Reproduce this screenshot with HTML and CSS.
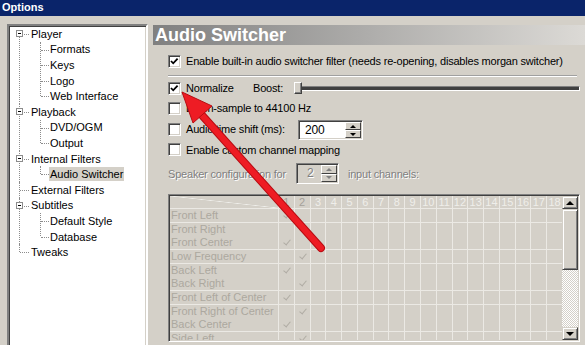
FILE: index.html
```html
<!DOCTYPE html>
<html lang="en">
<head>
  <meta charset="UTF-8">
  <title>Options</title>
  <link rel="stylesheet" href="styles.css">
</head>
<body>
  <div class="titlebar">Options</div>

  <div class="main">
    <!-- left navigation tree -->
    <div class="tree">
      <div class="node">
        <div class="item"><span class="box"></span><span class="txt">Player</span></div>
        <div class="kids">
          <div class="item"><span class="txt">Formats</span></div>
          <div class="item"><span class="txt">Keys</span></div>
          <div class="item"><span class="txt">Logo</span></div>
          <div class="item"><span class="txt">Web Interface</span></div>
        </div>
      </div>
      <div class="node">
        <div class="item"><span class="box"></span><span class="txt">Playback</span></div>
        <div class="kids">
          <div class="item"><span class="txt">DVD/OGM</span></div>
          <div class="item"><span class="txt">Output</span></div>
        </div>
      </div>
      <div class="node">
        <div class="item"><span class="box"></span><span class="txt">Internal Filters</span></div>
        <div class="kids">
          <div class="item"><span class="txt sel">Audio Switcher</span></div>
        </div>
      </div>
      <div class="node">
        <div class="item"><span class="txt">External Filters</span></div>
      </div>
      <div class="node">
        <div class="item"><span class="box"></span><span class="txt">Subtitles</span></div>
        <div class="kids">
          <div class="item"><span class="txt">Default Style</span></div>
          <div class="item"><span class="txt">Database</span></div>
        </div>
      </div>
      <div class="node">
        <div class="item"><span class="txt">Tweaks</span></div>
      </div>
    </div>

    <!-- property page -->
    <div class="page">
      <div class="page-head">Audio Switcher</div>
      <div class="page-body">
        <div class="opt opt-enable">
          <span class="cb"><svg viewBox="0 0 11 11"><polyline points="2,5 4.2,7.3 8.6,2.6"/></svg></span>
          <span>Enable built-in audio switcher filter (needs re-opening, disables morgan switcher)</span>
        </div>
        <div class="sep"></div>
        <div class="opt">
          <span class="cb"><svg viewBox="0 0 11 11"><polyline points="2,5 4.2,7.3 8.6,2.6"/></svg></span>
          <span class="lbl-norm">Normalize</span>
          <span class="lbl-boost">Boost:</span>
          <div class="slider"><span class="thumb"></span></div>
        </div>
        <div class="opt">
          <span class="cb"></span>
          <span>Down-sample to 44100 Hz</span>
        </div>
        <div class="opt opt-shift">
          <span class="cb"></span>
          <span class="lbl-shift">Audio time shift (ms):</span>
          <div class="spin">
            <span class="val">200</span>
            <span class="btns"><span class="btn up"></span><span class="btn down"></span></span>
          </div>
        </div>
        <div class="opt opt-custom">
          <span class="cb"></span>
          <span>Enable custom channel mapping</span>
        </div>
        <div class="speaker">
          <span class="dis">Speaker configuration for</span>
          <div class="spin spin-dis">
            <span class="val dis">2</span>
            <span class="btns"><span class="btn up"></span><span class="btn down"></span></span>
          </div>
          <span class="dis">input channels:</span>
        </div>

        <div class="matrix">
          <div class="cells">
            <div class="mrow mhead">
              <span class="diag"></span>
              <b class="dk">1</b><b class="dk">2</b><b>3</b><b>4</b><b>5</b><b>6</b><b>7</b><b>8</b><b>9</b>
              <b>10</b><b>11</b><b>12</b><b>13</b><b>14</b><b>15</b><b>16</b><b>17</b><b>18</b>
            </div>
            <div class="mrow"><span class="name">Front Left</span><i class="on"></i><i></i><i></i><i></i><i></i><i></i><i></i><i></i><i></i><i></i><i></i><i></i><i></i><i></i><i></i><i></i><i></i><i></i></div>
            <div class="mrow"><span class="name">Front Right</span><i></i><i class="on"></i><i></i><i></i><i></i><i></i><i></i><i></i><i></i><i></i><i></i><i></i><i></i><i></i><i></i><i></i><i></i><i></i></div>
            <div class="mrow"><span class="name">Front Center</span><i class="on"></i><i></i><i></i><i></i><i></i><i></i><i></i><i></i><i></i><i></i><i></i><i></i><i></i><i></i><i></i><i></i><i></i><i></i></div>
            <div class="mrow"><span class="name">Low Frequency</span><i></i><i class="on"></i><i></i><i></i><i></i><i></i><i></i><i></i><i></i><i></i><i></i><i></i><i></i><i></i><i></i><i></i><i></i><i></i></div>
            <div class="mrow"><span class="name">Back Left</span><i class="on"></i><i></i><i></i><i></i><i></i><i></i><i></i><i></i><i></i><i></i><i></i><i></i><i></i><i></i><i></i><i></i><i></i><i></i></div>
            <div class="mrow"><span class="name">Back Right</span><i></i><i class="on"></i><i></i><i></i><i></i><i></i><i></i><i></i><i></i><i></i><i></i><i></i><i></i><i></i><i></i><i></i><i></i><i></i></div>
            <div class="mrow"><span class="name">Front Left of Center</span><i class="on"></i><i></i><i></i><i></i><i></i><i></i><i></i><i></i><i></i><i></i><i></i><i></i><i></i><i></i><i></i><i></i><i></i><i></i></div>
            <div class="mrow"><span class="name">Front Right of Center</span><i></i><i class="on"></i><i></i><i></i><i></i><i></i><i></i><i></i><i></i><i></i><i></i><i></i><i></i><i></i><i></i><i></i><i></i><i></i></div>
            <div class="mrow"><span class="name">Back Center</span><i class="on"></i><i></i><i></i><i></i><i></i><i></i><i></i><i></i><i></i><i></i><i></i><i></i><i></i><i></i><i></i><i></i><i></i><i></i></div>
            <div class="mrow"><span class="name">Side Left</span><i></i><i class="on"></i><i></i><i></i><i></i><i></i><i></i><i></i><i></i><i></i><i></i><i></i><i></i><i></i><i></i><i></i><i></i><i></i></div>
          </div>
          <div class="sbar">
            <span class="sb-btn up"></span>
            <span class="sb-thumb"></span>
            <span class="sb-track"></span>
            <span class="sb-btn down"></span>
          </div>
        </div>
      </div>
    </div>
  </div>

  <!-- red annotation arrow drawn over the dialog -->
  <svg class="arrow" width="585" height="345" viewBox="0 0 585 345">
    <line x1="321" y1="248" x2="200" y2="113" stroke="#b80c12" stroke-width="8" stroke-linecap="round"/>
    <line x1="321" y1="248" x2="200" y2="113" stroke="#ee1c24" stroke-width="6" stroke-linecap="round"/>
    <polygon points="182,92 212,106 193,123" fill="#ee1c24" stroke="#b80c12" stroke-width="1" stroke-linejoin="round"/>
  </svg>
</body>
</html>
```

FILE: styles.css
```css
* {
  box-sizing: border-box;
}

body {
  margin: 0;
  width: 585px;
  height: 345px;
  overflow: hidden;
  position: relative;
  background: #d4d0c8;
  font-family: "Liberation Sans", Arial, sans-serif;
  font-size: 11px;
  color: #000;
}

.titlebar {
  height: 16px;
  line-height: 15px;
  padding-left: 2px;
  background: #0a246a;
  color: #fff;
  font-weight: bold;
}

.main {
  display: flex;
  align-items: flex-start;
}

/* tree */
.tree {
  width: 141px;
  height: 330px;
  margin: 8px 0 0 7px;
  background: #fff;
  border: 2px solid;
  border-color: #808080 #fff #fff #808080;
  box-shadow: inset 1px 1px #404040, inset -1px -1px #d4d0c8;
  padding-left: 0;
}

.node {
  position: relative;
}

.node::before {
  content: '';
  position: absolute;
  left: 10px;
  top: 0;
  bottom: 0;
  border-left: 1px dotted #8c8c8c;
}

.node:first-child::before {
  top: 8px;
}

.node:last-child::before {
  bottom: auto;
  height: 8px;
}

.item {
  position: relative;
  height: 15.6px;
  display: flex;
  align-items: center;
  padding-left: 21px;
}

.item::before {
  content: '';
  position: absolute;
  left: 11px;
  width: 9px;
  top: 8px;
  border-top: 1px dotted #8c8c8c;
}

.box {
  position: absolute;
  left: 7px;
  top: 4px;
  width: 7px;
  height: 7px;
  background: #fff;
  border: 1px solid #8c8c8c;
  z-index: 1;
}

.box::after {
  content: '';
  position: absolute;
  left: 1px;
  top: 2px;
  width: 3px;
  height: 1px;
  background: #000;
}

.txt {
  padding: 1px 1px;
  line-height: 12px;
}

.sel {
  background: #d4d0c8;
}

.kids {
  position: relative;
}

.kids::before {
  content: '';
  position: absolute;
  left: 31px;
  top: 0;
  bottom: 8px;
  border-left: 1px dotted #8c8c8c;
}

.kids .item {
  padding-left: 40px;
}

.kids .item::before {
  left: 32px;
  width: 8px;
}

/* page */
.page {
  flex: 1;
  margin: 9px 0 0 5px;
}

.page-head {
  height: 20px;
  line-height: 21px;
  padding-left: 2px;
  background: linear-gradient(to right, #808080, #dcdad6);
  color: #fff;
  font-size: 18px;
  font-weight: bold;
}

.page-body {
  padding: 0 5px 0 15px;
  letter-spacing: -0.2px;
}

.opt {
  display: flex;
  align-items: center;
  height: 20px;
  gap: 5px;
}

.opt-enable {
  margin-top: 6px;
}

.sep {
  margin: 4px 3px 1px 0;
  height: 2px;
  border-top: 1px solid #a0a0a0;
  border-bottom: 1px solid #fff;
}

.opt-shift {
  height: 22px;
}

.opt-shift .spin {
  align-self: flex-end;
}

.opt-custom {
  height: 19px;
}

.cb {
  flex: none;
  width: 13px;
  height: 13px;
  background: #fff;
  border: 1px solid;
  border-color: #808080 #fff #fff #808080;
  box-shadow: inset 1px 1px #404040, inset -1px -1px #d4d0c8;
}

.cb svg {
  display: block;
  width: 11px;
  height: 11px;
}

.cb polyline {
  fill: none;
  stroke: #000;
  stroke-width: 1.8;
}

.lbl-norm {
  width: 62px;
}

.lbl-boost {
  width: 36px;
}

.slider {
  flex: 1;
  height: 12px;
  position: relative;
}

.slider::before {
  content: '';
  position: absolute;
  left: 3px;
  right: 0;
  top: 4px;
  height: 3px;
  border-top: 1px solid #808080;
  border-bottom: 1px solid #fff;
  border-right: 1px solid #fff;
  background: #404040;
}

.thumb {
  position: absolute;
  left: 0;
  top: 0;
  width: 8px;
  height: 12px;
  background: #d4d0c8;
  border: 1px solid;
  border-color: #fff #404040 #404040 #fff;
  box-shadow: inset -1px -1px #808080;
  z-index: 1;
}

.lbl-shift {
  width: 107px;
}

.spin {
  display: flex;
  width: 65px;
  height: 20px;
  background: #fff;
  border: 1px solid;
  border-color: #808080 #fff #fff #808080;
  box-shadow: inset 1px 1px #404040, inset -1px -1px #d4d0c8;
  padding: 1px;
}

.spin .val {
  flex: 1;
  padding-left: 5px;
  line-height: 16px;
  font-size: 12px;
}

.btns {
  width: 16px;
  display: flex;
  flex-direction: column;
}

.btn {
  flex: 1;
  background: #d4d0c8;
  border: 1px solid;
  border-color: #fff #404040 #404040 #fff;
  display: flex;
  align-items: center;
  justify-content: center;
}

.btn::after {
  content: '';
  border-left: 3px solid transparent;
  border-right: 3px solid transparent;
}

.btn.up::after {
  border-bottom: 3px solid #000;
}

.btn.down::after {
  border-top: 3px solid #000;
}

.speaker {
  display: flex;
  align-items: center;
  margin-top: 4px;
  height: 21px;
}

.dis {
  color: #808080;
  text-shadow: 1px 1px #fff;
}

.spin-dis {
  width: 43px;
  height: 21px;
  margin: 0 9px 0 10px;
  background: #d4d0c8;
}

.spin-dis .val {
  padding-left: 9px;
}

.spin-dis .btn.up::after {
  border-bottom-color: #808080;
}

.spin-dis .btn.down::after {
  border-top-color: #808080;
}

/* channel matrix */
.matrix {
  margin-top: 10px;
  height: 148px;
  display: flex;
  border: 1px solid;
  border-color: #808080 #fff #fff #808080;
  box-shadow: inset 1px 1px #404040, inset -1px -1px #d4d0c8;
  padding: 1px;
  letter-spacing: 0;
}

.cells {
  flex: 1;
  overflow: hidden;
  background: #ebe9e4;
}

.mrow {
  display: grid;
  grid-template-columns: 108px repeat(18, 1fr);
  column-gap: 1px;
  height: 12.67px;
  margin-bottom: 1px;
  color: #aca89f;
}

.mrow > * {
  background: #d4d0c8;
  position: relative;
}

.mhead {
  height: 12px;
}

.mhead b {
  font-weight: normal;
  text-align: center;
  line-height: 12px;
  color: #efeeea;
}

.mhead b.dk {
  color: #a5a19a;
}

.diag {
  background: linear-gradient(to top right, #d4d0c8 calc(50% - 0.6px), #efeeea 50%, #d4d0c8 calc(50% + 0.6px));
}

.name {
  padding-left: 1px;
  line-height: 13px;
  white-space: nowrap;
}

.on::after {
  content: '';
  position: absolute;
  left: 6px;
  top: 2px;
  width: 3px;
  height: 6px;
  border-right: 1.5px solid #b0aca4;
  border-bottom: 1.5px solid #b0aca4;
  transform: rotate(40deg);
}

.sbar {
  width: 16px;
  display: flex;
  flex-direction: column;
}

.sb-btn,
.sb-thumb {
  background: #d4d0c8;
  border: 1px solid;
  border-color: #d4d0c8 #404040 #404040 #d4d0c8;
  box-shadow: inset 1px 1px #fff, inset -1px -1px #808080;
}

.sb-btn {
  height: 13px;
  display: flex;
  align-items: center;
  justify-content: center;
}

.sb-btn::after {
  content: '';
  border-left: 4px solid transparent;
  border-right: 4px solid transparent;
}

.sb-btn.up::after {
  border-bottom: 4px solid #000;
}

.sb-btn.down::after {
  border-top: 4px solid #000;
}

.sb-thumb {
  height: 61px;
}

.sb-track {
  flex: 1;
  background: conic-gradient(#fff 25%, #d4d0c8 0 50%, #fff 0 75%, #d4d0c8 0);
  background-size: 2px 2px;
}

.arrow {
  position: absolute;
  left: 0;
  top: 0;
  pointer-events: none;
}
```
